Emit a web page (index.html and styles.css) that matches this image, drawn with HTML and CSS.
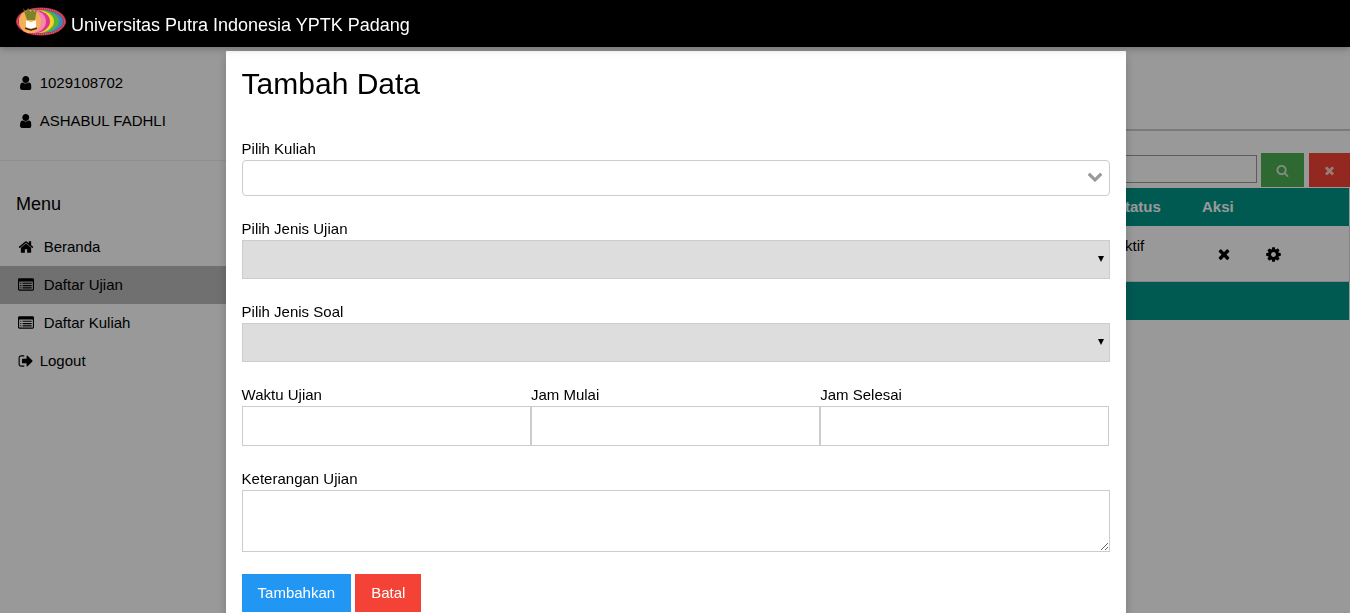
FILE: index.html
```html
<!DOCTYPE html>
<html lang="id">
<head>
<meta charset="utf-8">
<title>Tambah Data</title>
<link rel="stylesheet" href="styles.css">
</head>
<body>
<svg class="sprite" width="0" height="0" aria-hidden="true">
  <symbol id="i-user" viewBox="256 128 1280 1536"><path d="M1536 1399q0 109-62.5 187t-150.5 78h-854q-88 0-150.5-78t-62.5-187q0-85 8.5-160.5t31.5-152 58.5-131 94-89 134.5-34.5q131 128 313 128t313-128q76 0 134.5 34.5t94 89 58.5 131 31.5 152 8.5 160.5zm-256-887q0 159-112.5 271.5t-271.5 112.5-271.5-112.5-112.5-271.5 112.5-271.5 271.5-112.5 271.5 112.5 112.5 271.5z"/></symbol>
  <symbol id="i-home" viewBox="0 0 1792 1792"><path d="M1472 992v480q0 26-19 45t-45 19h-384v-384h-256v384h-384q-26 0-45-19t-19-45v-480q0-1 .5-3t.5-3l575-474 575 474q1 2 1 6zm223-69l-62 74q-8 9-21 11h-3q-13 0-21-7l-692-577-692 577q-12 8-24 7-13-2-21-11l-62-74q-8-10-7-23.5t11-21.5l719-599q32-26 76-26t76 26l244 204v-195q0-14 9-23t23-9h192q14 0 23 9t9 23v408l219 182q10 8 11 21.5t-7 23.5z"/></symbol>
  <symbol id="i-list" viewBox="0 0 1792 1792"><path d="M384 1184v64q0 13-9.5 22.5t-22.5 9.5h-64q-13 0-22.5-9.5t-9.5-22.5v-64q0-13 9.5-22.5t22.5-9.5h64q13 0 22.5 9.5t9.5 22.5zm0-256v64q0 13-9.5 22.5t-22.5 9.5h-64q-13 0-22.5-9.5t-9.5-22.5v-64q0-13 9.5-22.5t22.5-9.5h64q13 0 22.5 9.5t9.5 22.5zm0-256v64q0 13-9.5 22.5t-22.5 9.5h-64q-13 0-22.5-9.5t-9.5-22.5v-64q0-13 9.5-22.5t22.5-9.5h64q13 0 22.5 9.5t9.5 22.5zm1152 512v64q0 13-9.5 22.5t-22.5 9.5h-960q-13 0-22.5-9.5t-9.5-22.5v-64q0-13 9.5-22.5t22.5-9.5h960q13 0 22.5 9.5t9.5 22.5zm0-256v64q0 13-9.5 22.5t-22.5 9.5h-960q-13 0-22.5-9.5t-9.5-22.5v-64q0-13 9.5-22.5t22.5-9.5h960q13 0 22.5 9.5t9.5 22.5zm0-256v64q0 13-9.5 22.5t-22.5 9.5h-960q-13 0-22.5-9.5t-9.5-22.5v-64q0-13 9.5-22.5t22.5-9.5h960q13 0 22.5 9.5t9.5 22.5zm128 704v-832q0-13-9.5-22.5t-22.5-9.5h-1472q-13 0-22.5 9.5t-9.5 22.5v832q0 13 9.5 22.5t22.5 9.5h1472q13 0 22.5-9.5t9.5-22.5zm128-1088v1088q0 66-47 113t-113 47h-1472q-66 0-113-47t-47-113v-1088q0-66 47-113t113-47h1472q66 0 113 47t47 113z"/></symbol>
  <symbol id="i-out" viewBox="0 0 1792 1792"><path d="M704 1440q0 4 1 20t.5 26.5-3 23.5-10 19.5-20.5 6.5h-320q-119 0-203.5-84.5t-84.5-203.5v-704q0-119 84.5-203.5t203.5-84.5h320q13 0 22.5 9.5t9.5 22.5q0 4 1 20t.5 26.5-3 23.5-10 19.5-20.5 6.5h-320q-66 0-113 47t-47 113v704q0 66 47 113t113 47h312l11.5 1 11.5 3 8 5.5 7 9 2 13.5zm928-544q0 26-19 45l-544 544q-19 19-45 19t-45-19-19-45v-288h-448q-26 0-45-19t-19-45v-384q0-26 19-45t45-19h448v-288q0-26 19-45t45-19 45 19l544 544q19 19 19 45z"/></symbol>
  <symbol id="i-search" viewBox="0 0 1792 1792"><path d="M1216 832q0-185-131.500-316.500t-316.500-131.500-316.500 131.500-131.500 316.500 131.500 316.500 316.500 131.500 316.500-131.500 131.500-316.500zm512 832q0 52-38 90t-90 38q-54 0-90-38l-343-342q-179 124-399 124-143 0-273.500-55.500t-225-150-150-225-55.500-273.500 55.500-273.500 150-225 225-150 273.500-55.500 273.500 55.500 225 150 150 225 55.500 273.500q0 220-124 399l343 343q37 37 37 90z"/></symbol>
  <symbol id="i-times" viewBox="0 0 1792 1792"><path d="M1490 1322q0 40-28 68l-136 136q-28 28-68 28t-68-28l-294-294-294 294q-28 28-68 28t-68-28l-136-136q-28-28-28-68t28-68l294-294-294-294q-28-28-28-68t28-68l136-136q28-28 68-28t68 28l294 294 294-294q28-28 68-28t68 28l136 136q28 28 28 68t-28 68l-294 294 294 294q28 28 28 68z"/></symbol>
  <symbol id="i-cog" viewBox="0 0 1792 1792"><path d="M1152 896q0-106-75-181t-181-75-181 75-75 181 75 181 181 75 181-75 75-181zm512-109v222q0 12-8 23t-20 13l-185 28q-19 54-39 91 35 50 107 138 10 12 10 25t-9 23q-27 37-99 108t-94 71q-12 0-26-9l-138-108q-44 23-91 38-16 136-29 186-7 28-36 28h-222q-14 0-24.500-8.500t-11.500-21.500l-28-184q-49-16-90-37l-141 107q-10 9-25 9-14 0-25-11-126-114-165-168-7-10-7-23 0-12 8-23 15-21 51-66.500t54-70.500q-27-50-41-99l-183-27q-13-2-21-12.500t-8-23.500v-222q0-12 8-23t19-13l186-28q14-46 39-92-40-57-107-138-10-12-10-24 0-10 9-23 26-36 98.500-107.500t94.500-71.500q13 0 26 10l138 107q44-23 91-38 16-136 29-186 7-28 36-28h222q14 0 24.500 8.500t11.500 21.500l28 184q49 16 90 37l142-107q9-9 24-9 13 0 25 10 129 119 165 170 7 8 7 22 0 12-8 23-15 21-51 66.500t-54 70.500q26 50 41 98l183 28q13 2 21 12.500t8 23.500z"/></symbol>
  <symbol id="i-chev" viewBox="0 0 1792 1792"><path d="M1683 808l-742 741q-19 19-45 19t-45-19l-742-741q-19-19-19-45.500t19-45.500l166-165q19-19 45-19t45 19l531 531 531-531q19-19 45-19t45 19l166 165q19 19 19 45.500t-19 45.500z"/></symbol>
</svg>

<header class="topbar">
  <svg class="logo" viewBox="0 0 50 29" role="img" aria-label="Logo">
    <ellipse cx="25" cy="14.500" rx="25" ry="14" fill="#c2304f"/>
    <ellipse cx="25" cy="14.500" rx="23.500" ry="12.800" fill="none" stroke="#f3a7a0" stroke-width=".6" stroke-dasharray="1 1"/>
    <ellipse cx="25" cy="14.500" rx="22" ry="11.500" fill="#2f8fc0"/>
    <ellipse cx="23" cy="14.500" rx="20" ry="11.500" fill="#5cae3c"/>
    <ellipse cx="20.500" cy="14.500" rx="17.500" ry="11.500" fill="#f6d327"/>
    <ellipse cx="18.500" cy="14.500" rx="15.500" ry="11.500" fill="#e0338f"/>
    <ellipse cx="16.500" cy="14.500" rx="13.500" ry="11.500" fill="#f389ad"/>
    <ellipse cx="14" cy="14.500" rx="11" ry="11.500" fill="#f6ae58"/>
    <path d="M7 1l3 4 2-4 2.500 4L17 1l1 4 3-3-2 11h-8z" fill="#7b8426"/>
    <path d="M10 13.500l5 1.600 5-1.600v6.500l-5 1.600-5-1.600z" fill="#fff"/>
    <path d="M9 20.500l6 1.800 6-1.800v1.500l-6 1.800-6-1.800z" fill="#33261e"/>
  </svg>
  <span class="brand">Universitas Putra Indonesia YPTK Padang</span>
</header>

<div class="layout">
  <aside class="sidebar">
    <div class="profile">
      <div class="row"><svg class="ico ico-user"><use href="#i-user"/></svg><span>1029108702</span></div>
      <div class="row"><svg class="ico ico-user"><use href="#i-user"/></svg><span>ASHABUL FADHLI</span></div>
    </div>
    <h3 class="menu-title">Menu</h3>
    <nav>
      <a class="row nav-item"><svg class="ico ico-nav"><use href="#i-home"/></svg><span>Beranda</span></a>
      <a class="row nav-item active"><svg class="ico ico-nav"><use href="#i-list"/></svg><span>Daftar Ujian</span></a>
      <a class="row nav-item"><svg class="ico ico-nav"><use href="#i-list"/></svg><span>Daftar Kuliah</span></a>
      <a class="row nav-item"><svg class="ico ico-out"><use href="#i-out"/></svg><span>Logout</span></a>
    </nav>
  </aside>

  <main class="content">
    <div class="toolbar">
      <div class="search-box"></div>
      <button class="tool tool-green" type="button"><svg class="ico-tool"><use href="#i-search"/></svg></button>
      <button class="tool tool-red" type="button"><svg class="ico-tool"><use href="#i-times"/></svg></button>
    </div>
    <div class="tbl-head"><span class="col-status">Status</span><span class="col-aksi">Aksi</span></div>
    <div class="tbl-row">
      <span class="col-status cell-status">Aktif</span>
      <span class="col-aksi cell-aksi">
        <svg class="ico-act"><use href="#i-times"/></svg>
        <svg class="ico-act ico-cog"><use href="#i-cog"/></svg>
      </span>
    </div>
    <div class="tbl-foot"></div>
  </main>
</div>

<div class="overlay">
  <section class="modal">
    <h2 class="modal-title">Tambah Data</h2>
    <form class="form">
      <div class="group">
        <label class="label">Pilih Kuliah</label>
        <div class="combo"><svg class="combo-chev"><use href="#i-chev"/></svg></div>
      </div>
      <div class="group">
        <label class="label">Pilih Jenis Ujian</label>
        <div class="select-wrap"><select class="select"><option></option></select></div>
      </div>
      <div class="group">
        <label class="label">Pilih Jenis Soal</label>
        <div class="select-wrap"><select class="select"><option></option></select></div>
      </div>
      <div class="group cols">
        <div class="col"><label class="label">Waktu Ujian</label><input class="input" type="text"></div>
        <div class="col"><label class="label">Jam Mulai</label><input class="input" type="text"></div>
        <div class="col"><label class="label">Jam Selesai</label><input class="input" type="text"></div>
      </div>
      <div class="group">
        <label class="label">Keterangan Ujian</label>
        <textarea class="textarea"></textarea>
      </div>
      <div class="actions">
        <button class="btn btn-blue" type="button">Tambahkan</button>
        <button class="btn btn-red" type="button">Batal</button>
      </div>
    </form>
  </section>
</div>
</body>
</html>
```

FILE: styles.css
```css
* { box-sizing: border-box; }
html, body { height: 100%; }
body {
  margin: 0;
  overflow: hidden;
  background: #fff;
  color: #000;
  font-family: "Liberation Sans", Arial, sans-serif;
  font-size: 15px;
  line-height: 1.5;
}
.sprite { position: absolute; }

.topbar {
  height: 47px;
  background: #000;
  color: #fff;
  display: flex;
  align-items: center;
  padding: 0 0 0 16px;
  box-shadow: 0 2px 5px rgba(0, 0, 0, .16), 0 2px 10px rgba(0, 0, 0, .12);
  position: relative;
  z-index: 2;
}
.logo { width: 50px; height: 29px; align-self: flex-start; margin-top: 7px; flex: none; }
.brand { font-size: 18px; margin: 4px 0 0 5px; }

.layout { display: flex; height: 566px; }
.sidebar { width: 226px; flex: none; background: #fff; }
.profile { padding-top: 17px; border-bottom: 1px solid #eee; height: 114px; }
.row { display: flex; align-items: center; height: 38px; }
.profile .row { padding-left: 20px; }
.ico { fill: currentColor; flex: none; }
.ico-user { width: 11.500px; height: 14px; margin-right: 8.200px; }
.menu-title { font-size: 18px; font-weight: 400; margin: 0; padding: 30px 0 0 16px; line-height: 27px; height: 67px; }
.nav-item { padding-left: 18px; color: #000; }
.nav-item.active { background: #bbb; }
.ico-nav { width: 16px; height: 16px; margin-right: 9.700px; }
.ico-out { width: 16px; height: 16px; margin-right: 5.700px; }

.content { flex: 1; padding-top: 82px; }
.content::before { content: ""; display: block; height: 2px; background: #ccc; }
.toolbar { display: flex; justify-content: flex-end; height: 35px; margin-top: 22px; }
.search-box { width: 400px; height: 28px; margin: 2px 4px 0 0; border: 1px solid #999; }
.tool { width: 43px; height: 34px; border: 0; padding: 0; color: #fff; display: flex; align-items: center; justify-content: center; }
.tool-green { background: #4caf50; }
.tool-red { background: #f44336; margin-left: 5px; width: 41px; }
.ico-tool { width: 13px; height: 13px; fill: currentColor; opacity: .75; }
.tbl-head { height: 38px; background: #009688; color: #fff; font-weight: 700; display: flex; align-items: center; margin-right: 1px; }
.tbl-row { height: 56px; display: flex; border-bottom: 1px solid #ddd; border-right: 1px solid #ddd; }
.tbl-foot { height: 38px; background: #009688; margin-right: 1px; }
.col-status { margin-left: 889px; width: 87px; flex: none; }
.cell-status { padding-top: 9px; }
.cell-aksi { display: flex; align-items: center; gap: 33px; padding: 1px 0 0 14px; }
.ico-act { width: 17px; height: 17px; fill: #000; }
.ico-act:first-child { width: 16px; height: 16px; }

.overlay { position: fixed; inset: 0; z-index: 1; background: rgba(0, 0, 0, .4); overflow: hidden; }
.modal { width: 900px; min-height: 570px; margin: 51px 0 0 225.600px; background: #fff; padding: 0 16px 16px; box-shadow: 0 4px 10px rgba(0, 0, 0, .2); }
.modal-title { font-size: 30px; font-weight: 400; line-height: 45px; margin: 0; padding-top: 10px; height: 87px; }
.group { margin-bottom: 22px; }
.label { display: block; height: 22px; line-height: 22px; }
.combo { height: 36px; border: 1px solid #ccc; border-radius: 4px; background: #fff; width: 868px; position: relative; }
.combo-chev { position: absolute; right: 6px; top: 7px; width: 16px; height: 16px; fill: #999; }
.select-wrap { position: relative; width: 868px; }
.select-wrap::after {
  content: "";
  position: absolute;
  right: 5.500px;
  top: 16px;
  border-style: solid;
  border-width: 6px 3.500px 0;
  border-color: #000 transparent transparent;
  pointer-events: none;
}
.select { display: block; appearance: none; width: 100%; height: 39px; background: #ddd; border: 1px solid #ccc; padding: 8px; font: inherit; border-radius: 0; }
.cols { display: flex; }
.col { width: 289.330px; flex: none; }
.col:last-child { width: 289px; }
.input { display: block; width: 100%; height: 40px; border: 1px solid #ccc; padding: 8px; font: inherit; background: #fff; border-radius: 0; outline: 0; }
.textarea { display: block; width: 868px; height: 62px; border: 1px solid #ccc; padding: 8px; font: inherit; margin: 0; border-radius: 0; outline: 0; }
.actions { display: flex; gap: 4px; }
.btn { border: 0; color: #fff; font: inherit; padding: 8px 16px; height: 38px; line-height: 22px; }
.btn-blue { background: #2196f3; }
.btn-red { background: #f44336; }
```
